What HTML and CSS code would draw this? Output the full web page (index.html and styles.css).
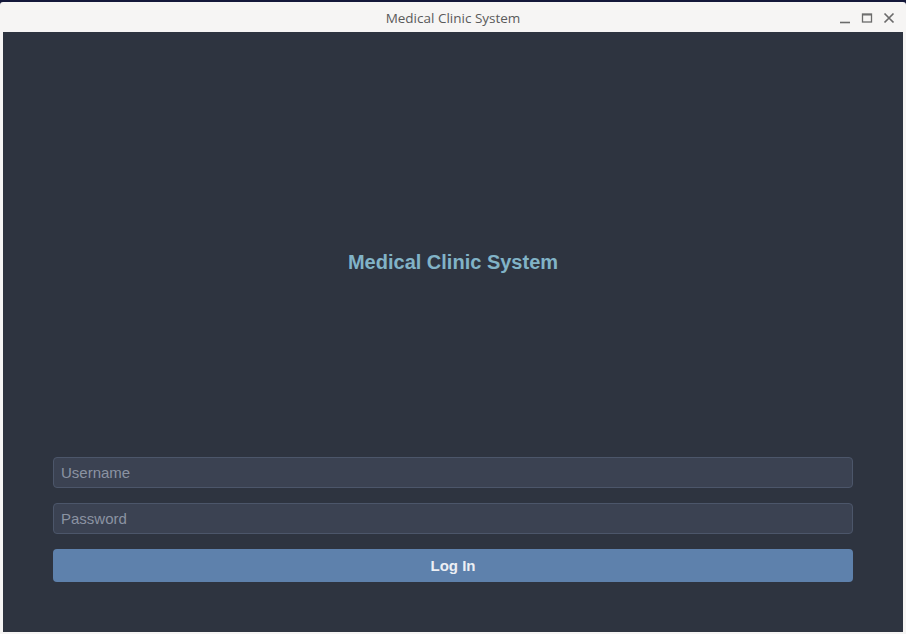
FILE: index.html
```html
<!DOCTYPE html>
<html>
<head>
<meta charset="utf-8">
<title>Medical Clinic System</title>
<link rel="stylesheet" href="styles.css">
</head>
<body>
<div class="desktop">
  <div class="window">
    <div class="titlebar">
      <span class="title">Medical Clinic System</span>
      <div class="controls">
        <svg class="ctl" width="12" height="12" viewBox="0 0 12 12"><path d="M1 10.5h10" stroke="#6b6b6b" stroke-width="1.6"/></svg>
        <svg class="ctl" width="12" height="12" viewBox="0 0 12 12"><rect x="1.5" y="2" width="9" height="8" fill="none" stroke="#6b6b6b" stroke-width="1.3"/><path d="M1.5 2.8h9" stroke="#6b6b6b" stroke-width="1.4"/></svg>
        <svg class="ctl" width="12" height="12" viewBox="0 0 12 12"><path d="M1.5 1.5l9 9M10.5 1.5l-9 9" stroke="#6b6b6b" stroke-width="1.7"/></svg>
      </div>
    </div>
    <div class="content">
      <div class="hero"><h1 class="heading">Medical Clinic System</h1></div>
      <form class="form">
        <input class="field" type="text" placeholder="Username">
        <input class="field" type="password" placeholder="Password">
        <button class="btn" type="button">Log In</button>
      </form>
    </div>
  </div>
</div>
</body>
</html>
```
FILE: styles.css
```css
html, body {
  margin: 0;
  padding: 0;
  width: 906px;
  height: 634px;
  overflow: hidden;
}
.desktop {
  width: 906px;
  height: 634px;
  background: #14183a;
  padding-top: 2px;
  box-sizing: border-box;
}
.window {
  width: 906px;
  height: 632px;
  background: #f6f5f4;
  display: flex;
  flex-direction: column;
  border-radius: 3px 3px 0 0;
}
.titlebar {
  height: 30px;
  position: relative;
  display: flex;
  align-items: center;
  justify-content: center;
}
.title {
  font-family: "Open Sans", "Noto Sans", sans-serif;
  font-size: 13.5px;
  color: #5a5a5a;
  padding-top: 1px;
}
.controls {
  position: absolute;
  right: 11px;
  top: 10px;
  display: flex;
  gap: 10px;
}
.ctl { display: block; }
.content {
  margin: 0 3px;
  height: 600px;
  background: #2e3440;
  display: flex;
  flex-direction: column;
  padding: 50px 50px 50px;
  box-sizing: border-box;
}
.hero {
  flex: 1;
  display: flex;
  align-items: center;
  justify-content: center;
}
.heading {
  margin: 0;
  font-family: "Liberation Sans", Arial, sans-serif;
  font-weight: bold;
  font-size: 20px;
  color: #81b3c7;
}
.form {
  display: flex;
  flex-direction: column;
  gap: 15px;
  margin: 15px 0 0;
}
.field {
  height: 31px;
  box-sizing: border-box;
  background: #3b4252;
  border: 1px solid #4c566a;
  border-radius: 4px;
  padding: 0 7px;
  font-family: "Liberation Sans", Arial, sans-serif;
  font-size: 15px;
  color: #e5e9f0;
  outline: none;
}
.field::placeholder { color: #8b93a2; }
.btn {
  height: 33px;
  background: #5e81ac;
  border: none;
  border-radius: 4px;
  font-family: "Liberation Sans", Arial, sans-serif;
  font-weight: bold;
  font-size: 15px;
  color: #eceff4;
}
```
